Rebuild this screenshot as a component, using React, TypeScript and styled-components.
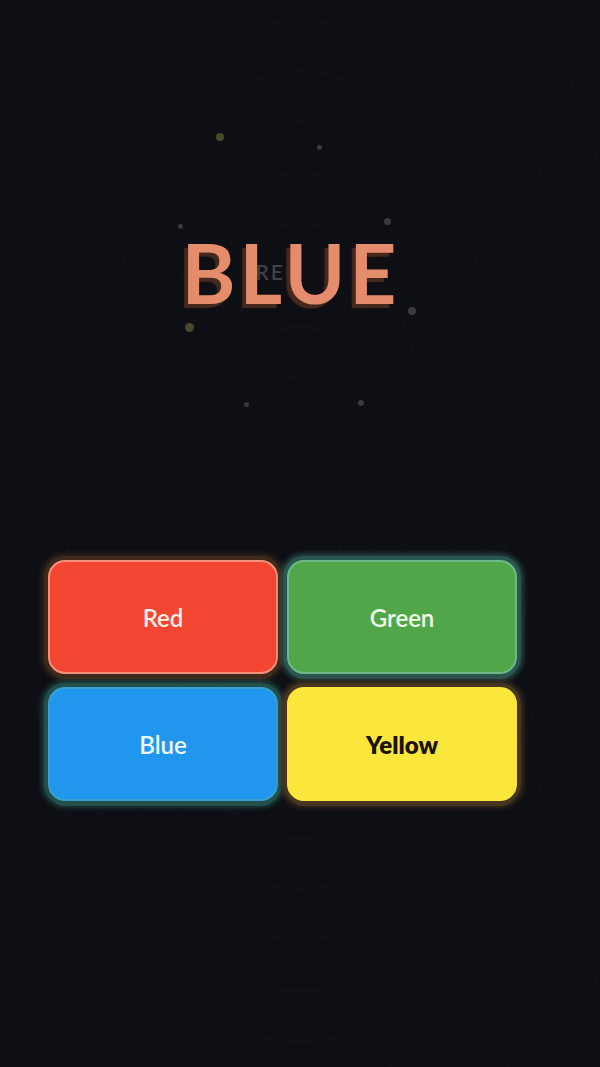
import styled, { createGlobalStyle } from 'styled-components'

const GlobalStyle = createGlobalStyle`
  html, body {
    margin: 0;
    padding: 0;
    background: #0e0f15;
  }
  * {
    box-sizing: border-box;
  }
`

const Screen = styled.div`
  position: relative;
  width: 600px;
  height: 1067px;
  overflow: hidden;
  font-family: Lato, 'Noto Sans', sans-serif;
  background:
    repeating-radial-gradient(
      ellipse at 50% 45%,
      rgba(255, 255, 255, 0.006) 0px,
      rgba(255, 255, 255, 0.006) 2px,
      transparent 2px,
      transparent 26px
    ),
    #0e0f15;
  display: flex;
  flex-direction: column;
  align-items: center;
`

const Stage = styled.div`
  position: relative;
  width: 100%;
  height: 560px;
  display: flex;
  justify-content: center;
  padding-top: 226px;
`

const Word = styled.div`
  position: relative;
  isolation: isolate;
  font-size: 82px;
  font-weight: 700;
  letter-spacing: 4px;
  line-height: 92px;
  color: #e48c6c;
  text-shadow: -4px 4px 1px #45291c;
  padding-left: 6px;
  margin-left: -24px;
`

const Ghost = styled.span`
  position: absolute;
  left: 80px;
  top: 34px;
  font-size: 21px;
  font-weight: 600;
  letter-spacing: 2px;
  line-height: 24px;
  color: #404045;
  text-shadow: none;
  z-index: -1;
`

const Dot = styled.span<{ $size: number; $color: string }>`
  position: absolute;
  width: ${(p) => p.$size}px;
  height: ${(p) => p.$size}px;
  border-radius: 50%;
  background: ${(p) => p.$color};
`

const Grid = styled.div`
  display: grid;
  grid-template-columns: 230px 230px;
  grid-auto-rows: 114px;
  column-gap: 9px;
  row-gap: 13px;
  margin-left: -35px;
`

const ColorButton = styled.button<{
  $bg: string
  $edge: string
  $glow: string
  $ink: string
}>`
  border: 2px solid ${(p) => p.$edge};
  border-radius: 17px;
  background: ${(p) => p.$bg};
  color: ${(p) => p.$ink};
  font-family: Lato, 'Noto Sans', sans-serif;
  font-size: 24px;
  font-weight: ${(p) => (p.$ink === '#1b1409' ? 800 : 600)};
  box-shadow:
    0 5px 0 ${(p) => p.$glow},
    0 0 0 4px ${(p) => p.$glow},
    0 0 4px 7px ${(p) => p.$glow}aa;
  cursor: pointer;
`

const dots = [
  { x: 216, y: 133, s: 8, c: '#4b4a26' },
  { x: 317, y: 145, s: 5, c: '#3a3a40' },
  { x: 178, y: 224, s: 5, c: '#3a3a40' },
  { x: 384, y: 218, s: 7, c: '#3a3a40' },
  { x: 408, y: 307, s: 8, c: '#3a3a42' },
  { x: 185, y: 323, s: 9, c: '#4a4828' },
  { x: 244, y: 402, s: 5, c: '#3a3a40' },
  { x: 358, y: 400, s: 6, c: '#3a3a40' },
  { x: 258, y: 302, s: 4, c: '#3a3a34' },
]

const buttons = [
  { label: 'Red', bg: '#f24633', edge: '#f3927a', glow: '#3f2a1b', ink: '#fbefe6' },
  { label: 'Green', bg: '#52a64a', edge: '#6fb88a', glow: '#2b5650', ink: '#eefbe9' },
  { label: 'Blue', bg: '#2196ee', edge: '#3b9fcf', glow: '#23504d', ink: '#eef8ff' },
  { label: 'Yellow', bg: '#fbe73b', edge: '#fbe73b', glow: '#46351f', ink: '#1b1409' },
]

const App = () => {
  return (
    <Screen>
      <GlobalStyle />
      <Stage>
        {dots.map((d, i) => (
          <Dot
            key={i}
            $size={d.s}
            $color={d.c}
            style={{ left: d.x, top: d.y }}
          />
        ))}
        <Word>
          <Ghost>RED</Ghost>
          BLUE
        </Word>
      </Stage>
      <Grid>
        {buttons.map((b) => (
          <ColorButton
            key={b.label}
            $bg={b.bg}
            $edge={b.edge}
            $glow={b.glow}
            $ink={b.ink}
          >
            {b.label}
          </ColorButton>
        ))}
      </Grid>
    </Screen>
  )
}

export default App
